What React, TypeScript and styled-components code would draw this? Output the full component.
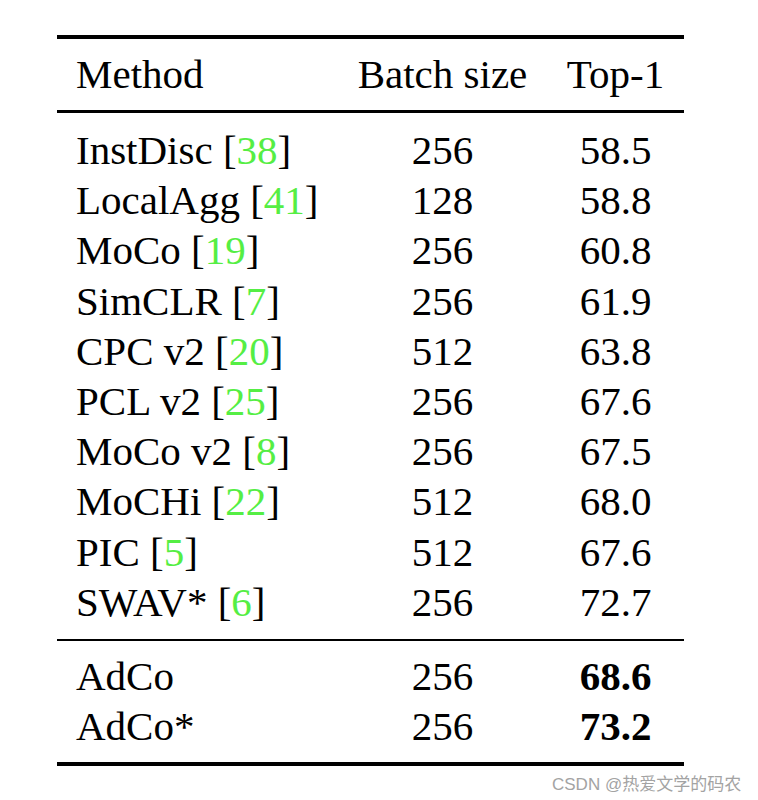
import React from 'react';
import styled, { createGlobalStyle } from 'styled-components';

const GlobalStyle = createGlobalStyle`
    html, body {
        margin: 0;
        padding: 0;
        background: #FFF;
    }
`;

const Page = styled.div`
    position: relative;
    width: 758px;
    height: 800px;
    padding-top: 35px;
    box-sizing: border-box;
    font-family: "Liberation Serif", "Times New Roman", serif;
    color: #000;
`;

const Table = styled.div`
    margin-left: 57px;
    width: 627px;
    display: flex;
    flex-direction: column;
`;

const Rule = styled.div<{ $weight: number }>`
    height: ${(p) => p.$weight}px;
    background: #000;
`;

const Section = styled.div<{ $top: number; $bottom: number }>`
    padding-top: ${(p) => p.$top}px;
    padding-bottom: ${(p) => p.$bottom}px;
`;

const Row = styled.div`
    display: grid;
    grid-template-columns: 281px 209px 137px;
    font-size: 41px;
    line-height: 50.2px;
    white-space: nowrap;
`;

const Name = styled.div`
    padding-left: 19px;
`;

const Cell = styled.div<{ $bold?: boolean }>`
    text-align: center;
    font-weight: ${(p) => (p.$bold ? 700 : 400)};
`;

const Cite = styled.span`
    color: #55ee44;
`;

const Watermark = styled.div`
    position: absolute;
    left: 552px;
    top: 770px;
    font-family: "Liberation Sans", "Noto Sans CJK SC", sans-serif;
    font-size: 17px;
    color: #a3a3a3;
    white-space: nowrap;
`;

type Entry = {
    name: string;
    cite?: string;
    batch: string;
    top1: string;
    bold?: boolean;
};

const baselines: Entry[] = [
    { name: 'InstDisc', cite: '38', batch: '256', top1: '58.5' },
    { name: 'LocalAgg', cite: '41', batch: '128', top1: '58.8' },
    { name: 'MoCo', cite: '19', batch: '256', top1: '60.8' },
    { name: 'SimCLR', cite: '7', batch: '256', top1: '61.9' },
    { name: 'CPC v2', cite: '20', batch: '512', top1: '63.8' },
    { name: 'PCL v2', cite: '25', batch: '256', top1: '67.6' },
    { name: 'MoCo v2', cite: '8', batch: '256', top1: '67.5' },
    { name: 'MoCHi', cite: '22', batch: '512', top1: '68.0' },
    { name: 'PIC', cite: '5', batch: '512', top1: '67.6' },
    { name: 'SWAV*', cite: '6', batch: '256', top1: '72.7' },
];

const ours: Entry[] = [
    { name: 'AdCo', batch: '256', top1: '68.6', bold: true },
    { name: 'AdCo*', batch: '256', top1: '73.2', bold: true },
];

const EntryRow = ({ entry }: { entry: Entry }) => (
    <Row>
        <Name>
            {entry.name}
            {entry.cite && (
                <>
                    {' ['}
                    <Cite>{entry.cite}</Cite>
                    {']'}
                </>
            )}
        </Name>
        <Cell>{entry.batch}</Cell>
        <Cell $bold={entry.bold}>{entry.top1}</Cell>
    </Row>
);

const App = () => {
    return (
        <Page>
            <GlobalStyle />
            <Table>
                <Rule $weight={4} />
                <Section $top={10} $bottom={10.7}>
                    <Row>
                        <Name>Method</Name>
                        <Cell>Batch size</Cell>
                        <Cell>Top-1</Cell>
                    </Row>
                </Section>
                <Rule $weight={3} />
                <Section $top={12} $bottom={12}>
                    {baselines.map((e) => (
                        <EntryRow key={e.name} entry={e} />
                    ))}
                </Section>
                <Rule $weight={2} />
                <Section $top={10} $bottom={10.5}>
                    {ours.map((e) => (
                        <EntryRow key={e.name} entry={e} />
                    ))}
                </Section>
                <Rule $weight={4} />
            </Table>
            <Watermark>CSDN @热爱文学的码农</Watermark>
        </Page>
    );
};

export default App;
